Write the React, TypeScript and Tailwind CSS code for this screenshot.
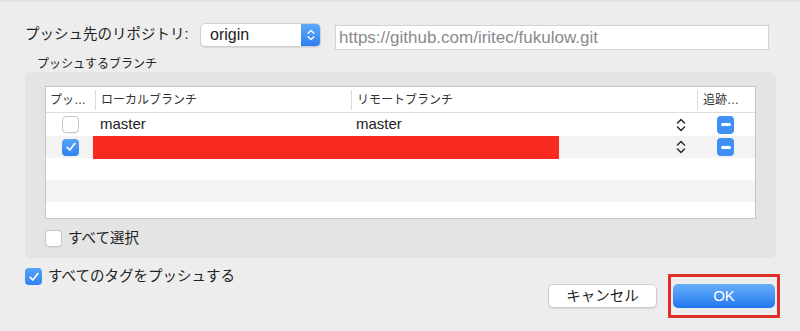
import { useState } from "react";

const font = { fontFamily: '"Liberation Sans", "Noto Sans CJK JP", sans-serif' };

const Check = ({ checked }: { checked: boolean }) =>
  checked ? (
    <div className="w-[17px] h-[17px] rounded-[4px] bg-gradient-to-b from-[#58a3f7] to-[#2f82f0] flex items-center justify-center">
      <svg width="12" height="12" viewBox="0 0 12 12">
        <path d="M2.2 6.4 L4.8 9 L9.8 2.6" fill="none" stroke="white" strokeWidth="1.7" strokeLinecap="round" strokeLinejoin="round" />
      </svg>
    </div>
  ) : (
    <div className="w-[17px] h-[17px] rounded-[4px] bg-white border border-[#c4c4c4] shadow-[0_1px_0_rgba(0,0,0,0.04)]" />
  );

const Chevrons = ({ color = "#333", w = 12, h = 16 }: { color?: string; w?: number; h?: number }) => (
  <svg width={w} height={h} viewBox="0 0 12 16">
    <path d="M2.5 6 L6 2.5 L9.5 6" fill="none" stroke={color} strokeWidth="1.6" strokeLinecap="round" strokeLinejoin="round" />
    <path d="M2.5 10 L6 13.5 L9.5 10" fill="none" stroke={color} strokeWidth="1.6" strokeLinecap="round" strokeLinejoin="round" />
  </svg>
);

const Minus = () => (
  <div className="w-[17px] h-[18px] rounded-[4px] bg-[#3e90f4] flex items-center justify-center">
    <div className="w-[10px] h-[3px] rounded-full bg-white" />
  </div>
);

type Branch = { local: string; remote: string; checked: boolean; redacted?: boolean };

const App = () => {
  const [rows] = useState<Branch[]>([
    { local: "master", remote: "master", checked: false },
    { local: "", remote: "", checked: true, redacted: true },
  ]);

  return (
    <div className="w-[800px] h-[331px] bg-[#ededed] border-t-2 border-[#e2e2e2] overflow-hidden text-[#222]" style={font}>
      {/* repository row */}
      <div className="flex items-center pl-[25px] pt-[18px]">
        <span className="text-[14.5px] w-[175px]">プッシュ先のリポジトリ:</span>
        <div className="flex w-[121px] h-[24px] rounded-[5px] bg-white border border-[#cfcfcf] shadow-[0_1px_1px_rgba(0,0,0,0.08)] overflow-hidden">
          <span className="flex-1 pl-[9px] text-[16px] leading-[22px]">origin</span>
          <div className="w-[19px] bg-gradient-to-b from-[#5fa9f8] to-[#2c7ff0] flex items-center justify-center">
            <Chevrons color="white" w={10} h={14} />
          </div>
        </div>
        <div className="ml-[14px] mt-[5px] w-[434px] h-[25px] bg-white border border-[#d2d2d2] pl-[3px] text-[17px] leading-[23px] text-[#8a8a8a]">
          https://github.com/iritec/fukulow.git
        </div>
      </div>

      <div className="pl-[37px] mt-[6px] text-[12px] leading-[16px] text-[#222]">プッシュするブランチ</div>

      {/* branch group */}
      <div className="ml-[25px] w-[751px] h-[186px] bg-[#e4e4e4] rounded-[5px] pt-[14px] px-[20px]">
        <div className="h-[133px] bg-white border border-[#c6c6c6] overflow-hidden">
          <div className="flex h-[26px] items-center border-b border-[#dddddd] text-[12px] text-[#333]">
            <div className="w-[49px] pl-[4px]">プッ…</div>
            <div className="w-[256px] h-[20px] border-l border-[#dcdcdc] pl-[5px] leading-[20px]">ローカルブランチ</div>
            <div className="w-[346px] h-[20px] border-l border-[#dcdcdc] pl-[5px] leading-[20px]">リモートブランチ</div>
            <div className="flex-1 h-[20px] border-l border-[#dcdcdc] pl-[5px] leading-[20px]">追跡…</div>
          </div>
          {rows.map((r, i) => (
            <div key={i} className={`relative flex ${i ? "h-[22px] bg-[#f3f3f3]" : "h-[23px] bg-white"} items-center`}>
              <div className="w-[49px] flex justify-center">
                <Check checked={r.checked} />
              </div>
              <div className="w-[256px] pl-[5px] text-[15px]">{r.local}</div>
              <div className="w-[346px] pl-[5px] text-[15px] flex items-center justify-between pr-[10px]">
                <span>{r.remote}</span>
                <Chevrons />
              </div>
              <div className="flex-1 flex justify-center pr-[1px]">
                <Minus />
              </div>
              {r.redacted && <div className="absolute left-[47px] top-0 w-[466px] h-[23px] bg-[#fb2a1f]" />}
            </div>
          ))}
          <div className="h-[22px] bg-white" />
          <div className="h-[22px] bg-[#f3f3f3]" />
          <div className="h-[22px] bg-white" />
        </div>
        <div className="flex items-center mt-[9px] gap-[6px]">
          <Check checked={false} />
          <span className="text-[14.5px]">すべて選択</span>
        </div>
      </div>

      {/* bottom row */}
      <div className="flex justify-between pl-[25px] pr-[20px]">
        <div className="flex items-center gap-[6px] mt-[10px] h-[17px]">
          <Check checked={true} />
          <span className="text-[14.5px]">すべてのタグをプッシュする</span>
        </div>
        <div className="flex items-start mt-[16px]">
          <button className="mt-[10px] w-[109px] h-[24px] rounded-[5px] bg-white border border-[#cdcdcd] shadow-[0_1px_1px_rgba(0,0,0,0.1)] text-[14.5px] leading-[22px]">
            キャンセル
          </button>
          <div className="ml-[11px] border-[3px] border-[#e0302a] px-[2px] pt-[7px] pb-[7px]">
            <button className="w-[102px] h-[24px] rounded-[5px] bg-gradient-to-b from-[#68b0fa] to-[#1f76ef] text-white text-[15px] leading-[24px]">
              OK
            </button>
          </div>
        </div>
      </div>
    </div>
  );
};

export default App;
